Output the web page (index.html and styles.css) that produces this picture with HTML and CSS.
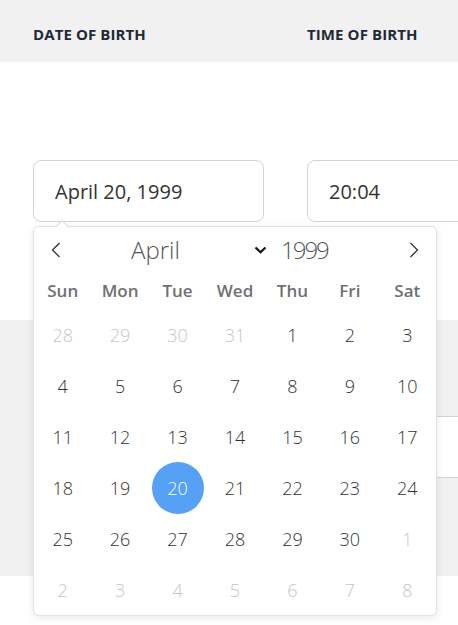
FILE: index.html
```html
<!DOCTYPE html>
<html lang="en">
<head>
    <meta charset="UTF-8">
    <title>Birth details</title>
    <link rel="stylesheet" href="styles.css">
</head>
<body>
<div class="page">
    <div class="band band-head">
        <div class="label">DATE OF BIRTH</div>
        <div class="label">TIME OF BIRTH</div>
    </div>
    <div class="band band-fields">
        <div class="picker">
            <div class="field">April 20, 1999</div>
            <div class="calendar">
                <div class="cal-head">
                    <span class="nav">
                        <svg width="10" height="16" viewBox="0 0 10 16"><polyline points="8.5,1 1.5,8 8.5,15" fill="none" stroke="#333" stroke-width="1.3"/></svg>
                    </span>
                    <span class="month">April
                        <svg class="caret" width="13" height="8" viewBox="0 0 13 8"><polyline points="1.5,1.5 6.5,6.2 11.5,1.5" fill="none" stroke="#111" stroke-width="2.2"/></svg>
                    </span>
                    <span class="year">1999</span>
                    <span class="nav nav-next">
                        <svg width="10" height="16" viewBox="0 0 10 16"><polyline points="1.5,1 8.5,8 1.5,15" fill="none" stroke="#333" stroke-width="1.3"/></svg>
                    </span>
                </div>
                <div class="weekdays">
                    <span>Sun</span><span>Mon</span><span>Tue</span><span>Wed</span><span>Thu</span><span>Fri</span><span>Sat</span>
                </div>
                <div class="days">
                    <span class="muted">28</span><span class="muted">29</span><span class="muted">30</span><span class="muted">31</span><span>1</span><span>2</span><span>3</span>
                    <span>4</span><span>5</span><span>6</span><span>7</span><span>8</span><span>9</span><span>10</span>
                    <span>11</span><span>12</span><span>13</span><span>14</span><span>15</span><span>16</span><span>17</span>
                    <span>18</span><span>19</span><span class="selected">20</span><span>21</span><span>22</span><span>23</span><span>24</span>
                    <span>25</span><span>26</span><span>27</span><span>28</span><span>29</span><span>30</span><span class="muted">1</span>
                    <span class="muted">2</span><span class="muted">3</span><span class="muted">4</span><span class="muted">5</span><span class="muted">6</span><span class="muted">7</span><span class="muted">8</span>
                </div>
            </div>
        </div>
        <div class="field">20:04</div>
    </div>
    <div class="band band-gray">
        <div class="field"></div>
        <div class="field"></div>
    </div>
</div>
</body>
</html>
```

FILE: styles.css
```css
* {
    margin: 0;
    padding: 0;
    box-sizing: border-box;
}

html, body {
    overflow: hidden;
}

body {
    font-family: "Open Sans", "Noto Sans", sans-serif;
    color: #333;
    background: #fff;
}

.page {
    width: 458px;
    height: 625px;
    overflow: hidden;
}

.band {
    display: grid;
    grid-template-columns: 274px 231px;
    padding-left: 33px;
}

.band-head {
    height: 62px;
    background: #f1f1f1;
    align-items: center;
    padding-top: 5px;
}

.label {
    font-size: 15px;
    font-weight: 700;
    letter-spacing: 0.1px;
    color: #1f2937;
}

.band-fields {
    padding-top: 98px;
    padding-bottom: 98px;
}

.band-gray {
    height: 256px;
    background: #f1f1f1;
    padding-top: 96px;
}

.field {
    width: 231px;
    height: 62px;
    padding: 0 21px;
    display: flex;
    align-items: center;
    background: #fff;
    border: 1px solid #d3d3d3;
    border-radius: 8px;
    font-size: 20px;
    color: #333;
}

.picker {
    position: relative;
    width: 231px;
}

/* popup */
.calendar {
    position: absolute;
    top: 66px;
    left: 0;
    z-index: 2;
    width: 404px;
    background: #fff;
    border: 1px solid #e2e2e2;
    border-radius: 6px;
    box-shadow: 0 2px 8px rgba(0, 0, 0, 0.09);
}

.calendar::before {
    content: "";
    position: absolute;
    top: -5px;
    left: 23px;
    width: 9px;
    height: 9px;
    background: #fff;
    border-top: 1px solid #dcdcdc;
    border-left: 1px solid #dcdcdc;
    transform: rotate(45deg);
}

.cal-head {
    height: 45px;
    display: flex;
    align-items: center;
}

.nav {
    width: 44px;
    display: flex;
    justify-content: center;
}

.nav-next {
    margin-left: auto;
}

.month {
    width: 196px;
    padding-left: 53px;
    padding-right: 7px;
    display: flex;
    align-items: center;
    justify-content: space-between;
    font-size: 24px;
    font-weight: 300;
    color: #555;
}

.year {
    margin-left: 7px;
    font-size: 24px;
    font-weight: 300;
    letter-spacing: -2px;
    color: #555;
}

.weekdays {
    height: 37px;
    display: grid;
    grid-template-columns: repeat(7, 1fr);
    align-items: center;
    text-align: center;
    font-size: 17px;
    font-weight: 600;
    color: #707070;
}

.days {
    display: grid;
    grid-template-columns: repeat(7, 1fr);
    grid-auto-rows: 51px;
    font-size: 18px;
    font-weight: 350;
    color: #333;
}

.days span {
    display: flex;
    align-items: center;
    justify-content: center;
}

.days .muted {
    color: #c6c6c6;
}

.days .selected {
    width: 52px;
    height: 52px;
    justify-self: center;
    align-self: center;
    border-radius: 50%;
    background: #56a1f6;
    color: #fff;
}
```
